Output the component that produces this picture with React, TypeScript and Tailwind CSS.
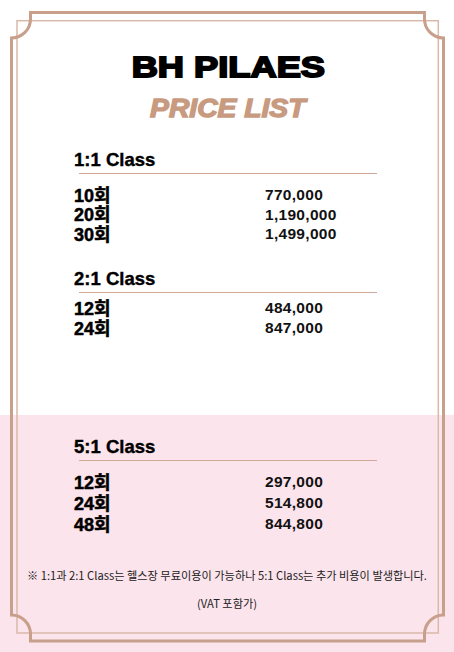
type Row = { label: string; price: string };

interface PriceSectionProps {
  title: string;
  rows: Row[];
  headingGap: string;
  rowsGap: string;
  rowHeight: string;
}

const oneToOne: Row[] = [
  { label: "10회", price: "770,000" },
  { label: "20회", price: "1,190,000" },
  { label: "30회", price: "1,499,000" },
];

const twoToOne: Row[] = [
  { label: "12회", price: "484,000" },
  { label: "24회", price: "847,000" },
];

const fiveToOne: Row[] = [
  { label: "12회", price: "297,000" },
  { label: "24회", price: "514,800" },
  { label: "48회", price: "844,800" },
];

function PriceSection({ title, rows, headingGap, rowsGap, rowHeight }: PriceSectionProps) {
  return (
    <div className={`pl-[74px] ${headingGap}`}>
      <h3 className="h-[22px] text-[18.5px] font-bold leading-[22px] text-black [-webkit-text-stroke:0.4px_black]">{title}</h3>
      <div className="ml-[5px] mt-[2px] h-px w-[298px] bg-[#cfa898]" />
      <div className={rowsGap}>
        {rows.map((row) => (
          <div key={row.label} className={`flex items-center ${rowHeight}`}>
            <span className="w-[191px] text-[18px] font-bold leading-[18px] text-black [-webkit-text-stroke:0.5px_black]">
              {row.label}
            </span>
            <span className="-mt-[1px] text-[15.5px] font-bold leading-[16px] tracking-[0.3px] text-[#111]">{row.price}</span>
          </div>
        ))}
      </div>
    </div>
  );
}

// decorative double frame with scooped corners
function Frame() {
  return (
    <svg className="pointer-events-none absolute inset-0" width="454" height="652" viewBox="0 0 454 652" fill="none">
      <rect x="17" y="20.7" width="421.3" height="612.3" stroke="#d9b9a9" strokeWidth="1.5" />
      <path
        d="M30.5 12.5 H424.5 V19 A19 19 0 0 0 443.5 38 V615 A19 19 0 0 0 424.5 634 V641 H30.5 V634 A19 19 0 0 0 11.5 615 V38 A19 19 0 0 0 30.5 19 Z"
        stroke="#c89f8b"
        strokeWidth="3"
      />
    </svg>
  );
}

export default function App() {
  return (
    <div className="relative h-[652px] w-[454px] overflow-hidden bg-white font-['Liberation_Sans','Noto_Sans_CJK_KR',sans-serif]">
      <section className="h-[415px] pt-[51px]">
        <h1 className="h-[32px] pl-[2px] text-center text-[29px] font-bold leading-[32px] text-black">
          <span className="inline-block scale-x-[1.25] [-webkit-text-stroke:1.8px_black]">BH PILAES</span>
        </h1>
        <h2 className="mt-[11px] h-[28px] pl-[2px] text-center text-[25px] font-bold italic leading-[28px] text-[#c89a7f]">
          <span className="inline-block scale-x-[1.13] [-webkit-text-stroke:1.3px_#c89a7f]">PRICE LIST</span>
        </h2>
        <PriceSection title="1:1 Class" rows={oneToOne} headingGap="mt-[27px]" rowsGap="mt-[12px]" rowHeight="h-[19.5px]" />
        <PriceSection title="2:1 Class" rows={twoToOne} headingGap="mt-[23px]" rowsGap="mt-[6px]" rowHeight="h-[20px]" />
      </section>

      <section className="h-[237px] bg-[#fbe4ec] pt-[21px]">
        <PriceSection title="5:1 Class" rows={fiveToOne} headingGap="" rowsGap="mt-[11px]" rowHeight="h-[21px]" />
        <div className="mt-[32px] text-center font-['Noto_Sans_CJK_KR',sans-serif] text-[11.2px] leading-[16px] text-[#222]">
          <p>※ 1:1과 2:1 Class는 헬스장 무료이용이 가능하나 5:1 Class는 추가 비용이 발생합니다.</p>
          <p className="mt-[12px]">(VAT 포함가)</p>
        </div>
      </section>

      <Frame />
    </div>
  );
}
